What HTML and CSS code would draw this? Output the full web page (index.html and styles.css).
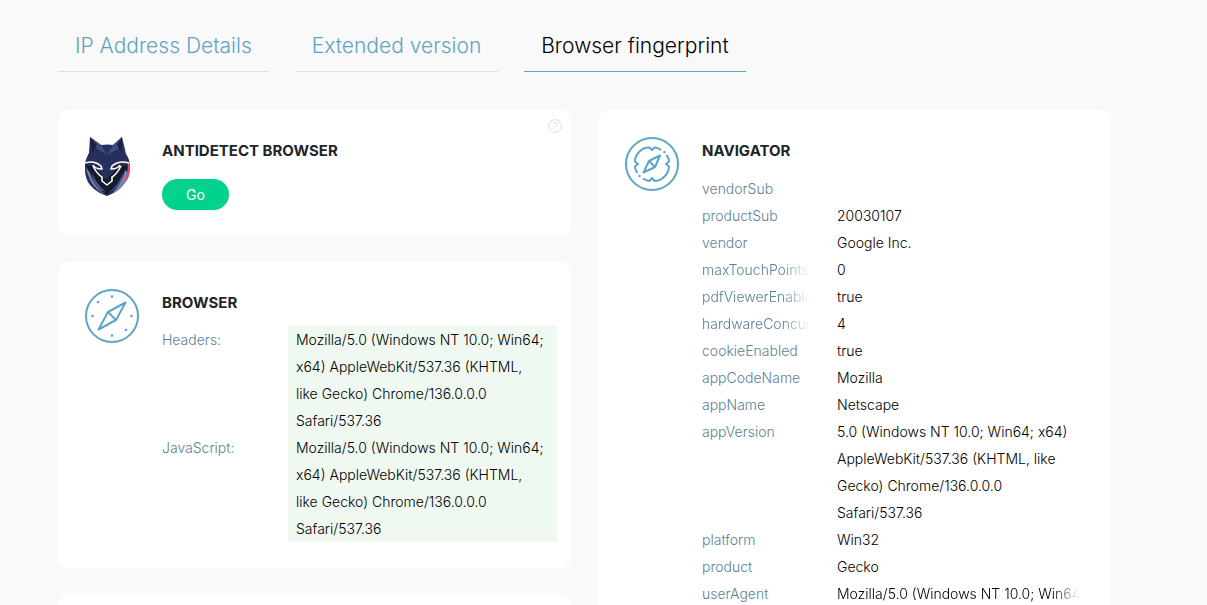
FILE: index.html
```
<!DOCTYPE html>
<html lang="en">
<head>
    <meta charset="UTF-8">
    <meta name="viewport" content="width=device-width, initial-scale=1">
    <title>Browser fingerprint</title>
    <link rel="stylesheet" href="styles.css">
</head>
<body>
    <nav class="tabs">
        <a href="#ip">IP Address Details</a>
        <a href="#extended">Extended version</a>
        <a href="#fingerprint" class="active">Browser fingerprint</a>
    </nav>

    <main class="columns">
        <div class="column">
            <section class="card">
                <svg class="icon wolf" viewBox="1 1 48 60" aria-hidden="true">
                    <path d="M6 1 L17 9 Q24 8 29 9 L38 1 Q40 9 42 18 Q46 23 46 32 Q45 42 39 49 Q32 57 23 60 Q13 57 6 49 Q0 42 1 27 Q3 20 5 17 Z" fill="#27305c"/>
                    <path d="M6 1 L17 9 L23 19 L12 12 Z M38 1 L29 9 L23 19 L34 13 Z" fill="#3d4b83"/>
                    <path d="M6 1 L13 9 L8 17 Z M38 1 L33 9 L38 17 Z" fill="#1b2145"/>
                    <path d="M2 29 L11 31 L22 44 L34 31 L44 29 L41 41 L23 59 L5 43 Z" fill="#151a2c"/>
                    <path d="M2 31 Q5 50 21 59 Q9 49 6 37 Z M28 58 Q38 47 41 34 L44 37 Q42 52 28 58 Z" fill="#7484b5"/>
                    <path d="M8 37 Q12 48 22 56 L17 54 Q8 47 8 37 Z M25 56 Q36 48 39 36 L38 44 Q32 53 25 56 Z" fill="#4b5b92"/>
                    <path d="M44 27 H46 Q47 42 40 48 Q44 38 44 27 Z" fill="#e9475a"/>
                    <path d="M1 27 Q10 24 17 30 L18 33 Q11 33 9 29 M45 27 Q35 24 28 30 L27 33 Q34 33 36 29 M9 30 Q13 38 18 41 V45 L23 49 L28 45 V41 Q33 38 37 30" fill="none" stroke="#fff" stroke-width="1.6"/>
                </svg>
                <div class="info">
                    <h2>ANTIDETECT BROWSER</h2>
                    <button type="button" class="go">Go</button>
                </div>
                <a href="#help" class="help" aria-label="Help">
                    <svg viewBox="0 0 14 14" aria-hidden="true">
                        <circle cx="7" cy="7" r="6.3"/>
                        <path d="M5 5.5 Q5 3.5 7 3.5 T9 5.4 Q9 6.4 7.8 7 Q7 7.4 7 8.3 M7 9.6 V10.8"/>
                    </svg>
                </a>
            </section>

            <section class="card">
                <svg class="icon" viewBox="0 0 54 54" aria-hidden="true">
                    <circle cx="27" cy="27" r="26"/>
                    <path d="M40.5 13.5 L31 31 L13.5 40.5 L23 23 Z M23 23 L31 31"/>
                    <g class="dots">
                        <circle cx="27" cy="7.5" r="1.3"/>
                        <circle cx="27" cy="46.5" r="1.3"/>
                        <circle cx="7.5" cy="27" r="1.3"/>
                        <circle cx="46.5" cy="27" r="1.3"/>
                        <circle cx="13" cy="13" r="1.3"/>
                        <circle cx="41" cy="41" r="1.3"/>
                    </g>
                </svg>
                <div class="info">
                    <h2>BROWSER</h2>
                    <table class="match">
                        <tr><th scope="row">Headers:</th><td>Mozilla/5.0 (Windows NT 10.0; Win64; x64) AppleWebKit/537.36 (KHTML, like Gecko) Chrome/136.0.0.0 Safari/537.36</td></tr>
                        <tr><th scope="row">JavaScript:</th><td>Mozilla/5.0 (Windows NT 10.0; Win64; x64) AppleWebKit/537.36 (KHTML, like Gecko) Chrome/136.0.0.0 Safari/537.36</td></tr>
                    </table>
                </div>
            </section>

            <section class="card"></section>
        </div>

        <div class="column">
            <section class="card">
                <svg class="icon" viewBox="0 0 54 54" aria-hidden="true">
                    <circle cx="27" cy="27" r="26"/>
                    <path d="M35 18.5 L30 30 L18.5 35.5 L24 24 Z M24 24 L30 30"/>
                    <path d="M36 13 Q33 10.5 29.5 10.5 L27 13 L24.5 10.5 Q19 10 14.5 14.5 Q10 19 10 24.5 L13 27 L10 29.5 Q10 33 12.5 36 M18 41.5 Q21 43.5 24.5 44 L27 41 L29.5 44 Q35 44 39.5 39.5 Q44 35 44 29.5 L41 27 L44 24.5 Q44 21 41.5 18"/>
                    <g class="dots">
                        <circle cx="39.5" cy="15" r="1.2"/>
                        <circle cx="14.5" cy="39" r="1.2"/>
                    </g>
                </svg>
                <div class="info">
                    <h2>NAVIGATOR</h2>
                    <table class="details">
                        <tr><th scope="row"><span>vendorSub</span></th><td></td></tr>
                        <tr><th scope="row"><span>productSub</span></th><td>20030107</td></tr>
                        <tr><th scope="row"><span>vendor</span></th><td>Google Inc.</td></tr>
                        <tr><th scope="row"><span class="fade">maxTouchPoints</span></th><td>0</td></tr>
                        <tr><th scope="row"><span class="fade">pdfViewerEnabled</span></th><td>true</td></tr>
                        <tr><th scope="row"><span class="fade">hardwareConcurrency</span></th><td>4</td></tr>
                        <tr><th scope="row"><span>cookieEnabled</span></th><td>true</td></tr>
                        <tr><th scope="row"><span>appCodeName</span></th><td>Mozilla</td></tr>
                        <tr><th scope="row"><span>appName</span></th><td>Netscape</td></tr>
                        <tr><th scope="row"><span>appVersion</span></th><td>5.0 (Windows NT 10.0; Win64; x64) AppleWebKit/537.36 (KHTML, like Gecko) Chrome/136.0.0.0 Safari/537.36</td></tr>
                        <tr><th scope="row"><span>platform</span></th><td>Win32</td></tr>
                        <tr><th scope="row"><span>product</span></th><td>Gecko</td></tr>
                        <tr><th scope="row"><span>userAgent</span></th><td><span class="fade">Mozilla/5.0 (Windows NT 10.0; Win64; x64)</span></td></tr>
                    </table>
                </div>
            </section>
        </div>
    </main>
</body>
</html>
```
FILE: styles.css
```
* {
  box-sizing: border-box;
}
body {
  margin: 0;
  height: 100vh;
  overflow: hidden;
  padding: 20px 96px 0 58px;
  background: #f9f9f9;
  font-family: Inter, sans-serif;
  font-size: 14px;
  font-weight: 350;
  line-height: 27px;
  color: #000;
}
.tabs {
  display: flex;
  gap: 26px;
  margin-bottom: 38px;
}
.tabs a {
  padding: 0 17px;
  border-bottom: 1px solid #d8dfe3;
  font-size: 21px;
  font-weight: 300;
  line-height: 51px;
  color: #5fa3c4;
  text-decoration: none;
}
.tabs .active {
  border-color: #5fa3c4;
  color: #000;
}
.columns {
  display: grid;
  grid-template-columns: 1fr 1fr;
  align-items: start;
  gap: 27px;
}
.column {
  display: grid;
  gap: 27px;
}
.card {
  position: relative;
  display: flex;
  gap: 23px;
  padding: 27px 14px 25px 27px;
  border-radius: 10px;
  background: #fff;
}
.icon {
  flex: none;
  width: 54px;
  height: 54px;
  fill: none;
  stroke: #5ba6c6;
  stroke-width: 2;
  stroke-linejoin: round;
}
.icon.wolf {
  width: 48px;
  height: 60px;
  margin-right: 6px;
  stroke: none;
}
.dots {
  fill: #5ba6c6;
  stroke: none;
}
.info {
  flex: 1;
  min-width: 0;
}
h2 {
  margin: 0;
  font-size: 15px;
  font-weight: 650;
  line-height: 28px;
  color: #212529;
}
.go {
  display: block;
  width: 67px;
  height: 31px;
  margin-top: 14px;
  padding: 0;
  border: 0;
  border-radius: 16px;
  background: #02d28d;
  font: inherit;
  font-weight: 400;
  color: #fff;
  cursor: pointer;
}
.help {
  position: absolute;
  top: 9px;
  right: 9px;
  width: 14px;
  height: 14px;
}
.help svg {
  display: block;
  fill: none;
  stroke: #c9e1ec;
}
table {
  width: 100%;
  margin-top: 10px;
  border-collapse: collapse;
  table-layout: fixed;
}
th {
  padding: 0;
  font-weight: 300;
  text-align: left;
  vertical-align: top;
  color: #5b8296;
}
td {
  height: 27px;
  padding: 0;
  vertical-align: top;
}
.match {
  margin: 9px 0 1px;
}
.match th {
  width: 126px;
}
.match td {
  padding: 0 12px 0 8px;
  background: #eff9f2;
}
.details th {
  width: 135px;
  padding-right: 27px;
}
.details td {
  padding-right: 18px;
}
.fade {
  display: block;
  overflow: hidden;
  white-space: nowrap;
  mask-image: linear-gradient(to left, transparent, #000 27px);
}
```
